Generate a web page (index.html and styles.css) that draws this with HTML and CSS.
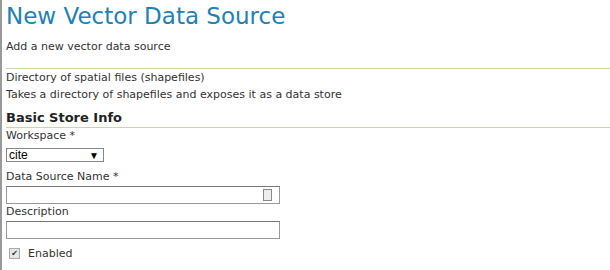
FILE: index.html
```html
<!DOCTYPE html>
<html lang="en">
<head>
  <meta charset="UTF-8">
  <title>New Vector Data Source</title>
  <link rel="stylesheet" href="styles.css">
</head>
<body>
  <div class="page">
    <h1>New Vector Data Source</h1>
    <p class="intro">Add a new vector data source</p>

    <!-- store type -->
    <div class="store-type">
      <div>Directory of spatial files (shapefiles)</div>
      <div>Takes a directory of shapefiles and exposes it as a data store</div>
    </div>

    <h2>Basic Store Info</h2>

    <form class="store-form">
      <label for="workspace">Workspace *</label>
      <div class="select-box">
        <span>cite</span>
        <span class="arrow">&#9660;</span>
      </div>

      <label for="name">Data Source Name *</label>
      <div class="text-box">
        <input type="text" id="name">
        <span class="field-icon"></span>
      </div>

      <label for="desc">Description</label>
      <div class="text-box">
        <input type="text" id="desc">
      </div>

      <div class="check-row">
        <span class="check">&#10004;</span>
        <span>Enabled</span>
      </div>
    </form>
  </div>
</body>
</html>
```

FILE: styles.css
```css
/* base */
body {
  margin: 0;
  font-family: "DejaVu Sans", Verdana, sans-serif;
  font-size: 11px;
  color: #333;
  background: #fff;
}
.page {
  border-left: 2px solid #9a9a9a;
  min-height: 270px;
  padding-left: 4px;
}
h1 {
  margin: 0;
  padding-top: 3px;
  font-size: 23px;
  font-weight: normal;
  color: #2181b5;
  line-height: 26px;
}
.intro {
  margin: 11px 0 0;
  line-height: 14px;
}
/* store type box */
.store-type {
  margin-top: 14px;
  border-top: 1px solid #c9d6a7;
  padding-top: 0;
  line-height: 17px;
}
h2 {
  margin: 6px 0 0;
  font-size: 13px;
  color: #222;
  line-height: 17px;
  border-bottom: 1px solid #c9d6a7;
  padding-bottom: 1px;
}
/* form */
.store-form {
  display: flex;
  flex-direction: column;
  align-items: flex-start;
}
.store-form label {
  line-height: 16px;
}
.select-box {
  margin: 4px 0 7px;
  width: 92px;
  height: 12px;
  border: 1px solid #888;
  display: flex;
  justify-content: space-between;
  align-items: center;
  font-family: "Liberation Sans", Arial, sans-serif;
  font-size: 12px;
  color: #000;
  padding: 0 2px;
}
.select-box .arrow {
  font-size: 10px;
  margin-right: 2px;
}
.text-box {
  position: relative;
  width: 272px;
  height: 16px;
  border: 1px solid #999;
  border-top-color: #777;
  margin-top: 1px;
}
.text-box input {
  border: none;
  width: 100%;
  height: 100%;
  padding: 0;
  outline: none;
}
.field-icon {
  position: absolute;
  right: 7px;
  top: 2px;
  width: 7px;
  height: 10px;
  border: 1px solid #888;
  background: #eee;
}
.check-row {
  display: flex;
  align-items: center;
  margin-top: 8px;
}
.check {
  width: 9px;
  height: 9px;
  border: 1px solid #aaa;
  background: #e6e6e6;
  font-size: 8px;
  line-height: 9px;
  text-align: center;
  color: #333;
  margin: 0 8px 0 3px;
}
```
